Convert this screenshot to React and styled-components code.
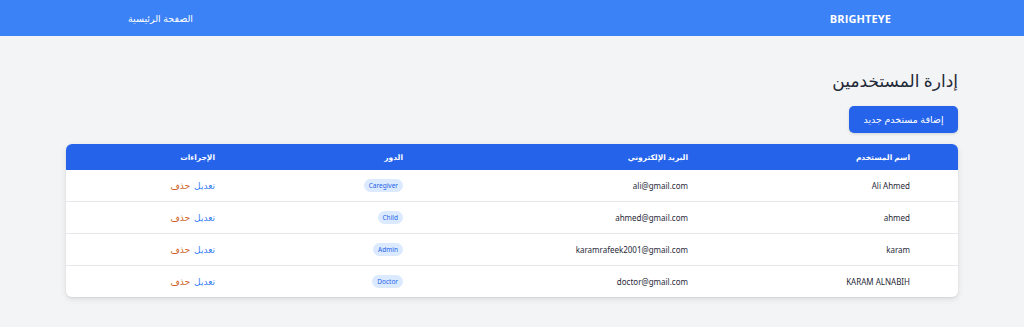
import React from "react";
import styled, { createGlobalStyle } from "styled-components";

const Global = createGlobalStyle`
  html, body { margin: 0; padding: 0; background: #f3f4f6; }
  body { font-family: "Segoe UI", Tahoma, "Noto Sans", "DejaVu Sans", sans-serif; color: #1f2937; }
`;

const Page = styled.div`
  direction: rtl;
  min-height: 327px;
  background: #f3f4f6;
`;

const Nav = styled.nav`
  height: 36px;
  background: #3b82f6;
  display: flex;
  align-items: center;
`;

const NavInner = styled.div`
  width: 768px;
  margin: 0 auto;
  padding: 0 5px 0 0;
  box-sizing: border-box;
  display: flex;
  justify-content: space-between;
  align-items: center;
  color: #fff;
`;

const Brand = styled.div`
  font-family: "Open Sans", "Noto Sans", sans-serif;
  font-weight: 700;
  font-size: 11px;
  letter-spacing: 0.1px;
`;

const NavLink = styled.a`
  color: #fff;
  text-decoration: none;
  font-size: 9.5px;
`;

const Main = styled.main`
  width: 892px;
  margin: 0 auto;
  padding-top: 30px;
`;

const Title = styled.h1`
  margin: 0;
  font-size: 17px;
  font-weight: 400;
  color: #1f2937;
  line-height: 30px;
`;

const AddButton = styled.button`
  margin-top: 10px;
  height: 27px;
  width: 109px;
  padding: 0;
  border: none;
  border-radius: 5px;
  background: #2563eb;
  color: #fff;
  font-family: inherit;
  font-size: 9.5px;
  box-shadow: 0 1px 3px rgba(0,0,0,0.15);
`;

const TableCard = styled.div`
  margin-top: 11px;
  background: #fff;
  border-radius: 6px;
  overflow: hidden;
  box-shadow: 0 2px 6px rgba(0,0,0,0.1), 0 1px 2px rgba(0,0,0,0.06);
`;

const Table = styled.table`
  width: 100%;
  border-collapse: collapse;
  table-layout: fixed;
`;

const Col = styled.col`
  width: ${(p) => p.$w}px;
`;

const Th = styled.th`
  height: 26px;
  background: #2563eb;
  color: #fff;
  font-size: 7.5px;
  font-weight: 700;
  text-align: right;
  padding: 0 48px 0 0;
`;

const Tr = styled.tr`
  & + & td { border-top: 1px solid #e5e7eb; }
`;

const Td = styled.td`
  height: 31px;
  padding: 0 48px 0 0;
  text-align: right;
  font-size: 8px;
  color: #1f2937;
`;

const Badge = styled.span`
  display: inline-block;
  padding: 2px 5px;
  border-radius: 9px;
  background: #dbeafe;
  color: #2563eb;
  font-size: 6.5px;
  line-height: 9px;
`;

const Actions = styled.div`
  display: flex;
  gap: 4px;
  align-items: center;
`;

const Action = styled.a`
  font-size: 9px;
  color: ${(p) => (p.$danger ? "#cf5f2c" : "#3b82f6")};
  cursor: pointer;
`;

const users = [
  { name: "Ali Ahmed", email: "ali@gmail.com", role: "Caregiver" },
  { name: "ahmed", email: "ahmed@gmail.com", role: "Child" },
  { name: "karam", email: "karamrafeek2001@gmail.com", role: "Admin" },
  { name: "KARAM ALNABIH", email: "doctor@gmail.com", role: "Doctor" },
];

export default function App() {
  return (
    <Page>
      <Global />
      <Nav>
        <NavInner>
          <Brand>BRIGHTEYE</Brand>
          <NavLink>الصفحة الرئيسية</NavLink>
        </NavInner>
      </Nav>
      <Main>
        <Title>إدارة المستخدمين</Title>
        <AddButton>إضافة مستخدم جديد</AddButton>
        <TableCard>
          <Table>
            <colgroup>
              <Col $w={222} />
              <Col $w={285} />
              <Col $w={188} />
              <Col $w={197} />
            </colgroup>
            <thead>
              <tr>
                <Th>اسم المستخدم</Th>
                <Th>البريد الإلكتروني</Th>
                <Th>الدور</Th>
                <Th>الإجراءات</Th>
              </tr>
            </thead>
            <tbody>
              {users.map((u) => (
                <Tr key={u.email}>
                  <Td>{u.name}</Td>
                  <Td>{u.email}</Td>
                  <Td><Badge>{u.role}</Badge></Td>
                  <Td>
                    <Actions>
                      <Action>تعديل</Action>
                      <Action $danger>حذف</Action>
                    </Actions>
                  </Td>
                </Tr>
              ))}
            </tbody>
          </Table>
        </TableCard>
      </Main>
    </Page>
  );
}
